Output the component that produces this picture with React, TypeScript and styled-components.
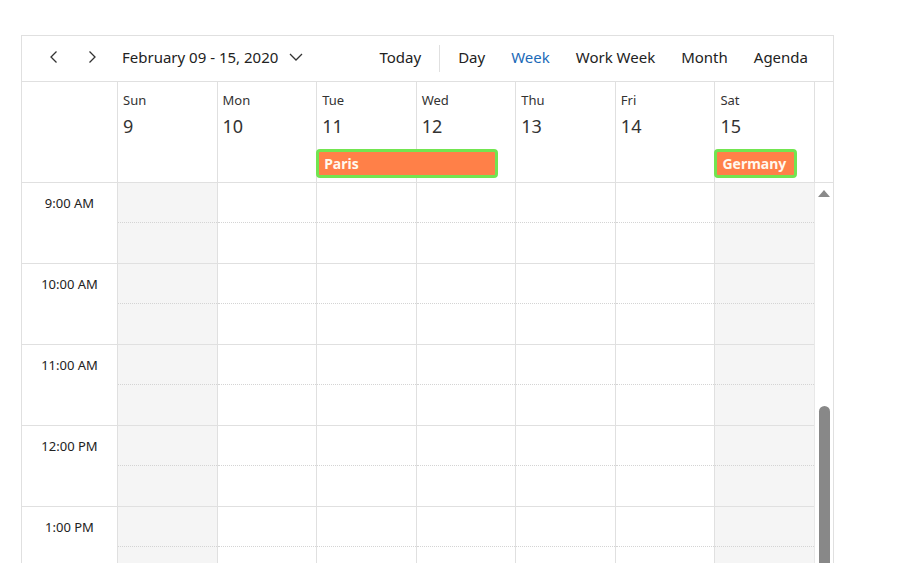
import styled, { createGlobalStyle } from 'styled-components';

// Datos de la semana
const days = [
  { name: 'Sun', date: 9, weekend: true },
  { name: 'Mon', date: 10, weekend: false },
  { name: 'Tue', date: 11, weekend: false },
  { name: 'Wed', date: 12, weekend: false },
  { name: 'Thu', date: 13, weekend: false },
  { name: 'Fri', date: 14, weekend: false },
  { name: 'Sat', date: 15, weekend: true }
];

const hours = ['9:00 AM', '10:00 AM', '11:00 AM', '12:00 PM', '1:00 PM'];

const events = [
  { title: 'Paris', column: '4 / 6' },
  { title: 'Germany', column: '8 / 9' }
];

const views = ['Day', 'Week', 'Work Week', 'Month', 'Agenda'];

const GlobalStyle = createGlobalStyle`
  html, body {
    margin: 0;
    background: #fff;
    overflow: hidden;
    font-family: 'Noto Sans', 'Open Sans', sans-serif;
    color: #333;
  }
`;

const Root = styled.div`
  padding: 35px 0 0 21px;
  height: 563px;
  box-sizing: border-box;
`;

const Scheduler = styled.div`
  width: 813px;
  border: 1px solid #e0e0e0;
  border-bottom: none;
  box-sizing: border-box;
`;

const Toolbar = styled.div`
  display: flex;
  align-items: center;
  height: 42px;
  padding: 0 12px 3px 17px;
  border-bottom: 1px solid #e0e0e0;
`;

const NavButton = styled.button`
  display: flex;
  align-items: center;
  justify-content: center;
  width: 30px;
  height: 30px;
  margin-right: 8px;
  padding: 0;
  border: none;
  background: none;
  color: #333;
  cursor: pointer;
`;

const DateRange = styled.div`
  display: flex;
  align-items: center;
  gap: 10px;
  margin-left: 7px;
  font-size: 15px;
  color: #222;
`;

const Spacer = styled.div`
  flex: 1;
`;

const ToolButton = styled.button<{ $active?: boolean }>`
  border: none;
  background: none;
  padding: 0 13px;
  font-family: inherit;
  font-size: 15px;
  color: ${(p) => (p.$active ? '#1b6ab8' : '#222')};
  cursor: pointer;
`;

const Divider = styled.div`
  width: 1px;
  height: 27px;
  margin: 3px 5px 0;
  background: #e0e0e0;
`;

const Header = styled.div`
  display: grid;
  grid-template-columns: 95px repeat(7, 1fr) 19px;
  grid-template-rows: 66px 34px;
  border-bottom: 1px solid #e0e0e0;
`;

const HeaderCell = styled.div<{ $col: number }>`
  grid-column: ${(p) => p.$col};
  grid-row: 1 / 3;
  border-left: 1px solid #e0e0e0;
  padding: 9px 0 0 5px;
`;

const ScrollGap = styled.div`
  grid-column: 9;
  grid-row: 1 / 3;
  border-left: 1px solid #e0e0e0;
`;

const DayName = styled.div`
  font-size: 13px;
  line-height: 18px;
  color: #333;
`;

const DayDate = styled.div`
  margin-top: 5px;
  font-size: 18px;
  line-height: 24px;
  color: #333;
`;

const Event = styled.div<{ $column: string }>`
  grid-column: ${(p) => p.$column};
  grid-row: 2;
  z-index: 1;
  align-self: start;
  margin: 1px 17px 0 0;
  height: 29px;
  box-sizing: border-box;
  border: 3px solid #72e550;
  border-radius: 4px;
  background: #ff8048;
  color: #fff8ee;
  font-size: 14px;
  font-weight: 700;
  line-height: 23px;
  padding-left: 5px;
`;

const Body = styled.div`
  display: flex;
`;

const TimeColumn = styled.div`
  width: 95px;
  flex-shrink: 0;
`;

const TimeSlot = styled.div`
  height: 81px;
  box-sizing: border-box;
  border-bottom: 1px solid #e0e0e0;
  padding-top: 11px;
  text-align: center;
  font-size: 13px;
  line-height: 18px;
  color: #222;
`;

const DayColumn = styled.div<{ $weekend: boolean }>`
  flex: 1;
  border-left: 1px solid #e0e0e0;
  background: ${(p) => (p.$weekend ? '#f5f5f5' : '#fff')};
`;

const HourCell = styled.div`
  height: 81px;
  box-sizing: border-box;
  border-bottom: 1px solid #e0e0e0;
`;

const HalfHour = styled.div`
  height: 39px;
  border-bottom: 1px dotted #d4d4d4;
`;

const Scrollbar = styled.div`
  width: 19px;
  flex-shrink: 0;
  border-left: 1px solid #e8e8e8;
  display: flex;
  flex-direction: column;
  align-items: center;
  padding-top: 7px;
  box-sizing: border-box;
`;

const ScrollArrow = styled.div`
  width: 0;
  height: 0;
  border-left: 6px solid transparent;
  border-right: 6px solid transparent;
  border-bottom: 7px solid #8a8a8a;
`;

const ScrollThumb = styled.div`
  margin-top: 209px;
  width: 11px;
  height: 200px;
  border-radius: 6px;
  background: #888;
`;

const Chevron = ({ d }: { d: string }) => (
  <svg width="16" height="16" viewBox="0 0 16 16" fill="none" stroke="#333" strokeWidth="1.3">
    <path d={d} />
  </svg>
);

const App = () => {
  return (
    <Root>
      <GlobalStyle />
      <Scheduler>
        <Toolbar>
          <NavButton>
            <Chevron d="M10.5 2.5 L5 8 L10.5 13.5" />
          </NavButton>
          <NavButton>
            <Chevron d="M5.5 2.5 L11 8 L5.5 13.5" />
          </NavButton>
          <DateRange>
            February 09 - 15, 2020
            <svg width="16" height="16" viewBox="0 0 16 16" fill="none" stroke="#333" strokeWidth="1.3">
              <path d="M2 5 L8 11 L14 5" />
            </svg>
          </DateRange>
          <Spacer />
          <ToolButton>Today</ToolButton>
          <Divider />
          {views.map((view) => (
            <ToolButton key={view} $active={view === 'Week'}>
              {view}
            </ToolButton>
          ))}
        </Toolbar>
        <Header>
          {days.map((day, index) => (
            <HeaderCell key={day.name} $col={index + 2}>
              <DayName>{day.name}</DayName>
              <DayDate>{day.date}</DayDate>
            </HeaderCell>
          ))}
          <ScrollGap />
          {events.map((event) => (
            <Event key={event.title} $column={event.column}>
              {event.title}
            </Event>
          ))}
        </Header>
        <Body>
          <TimeColumn>
            {hours.map((hour) => (
              <TimeSlot key={hour}>{hour}</TimeSlot>
            ))}
          </TimeColumn>
          {days.map((day) => (
            <DayColumn key={day.name} $weekend={day.weekend}>
              {hours.map((hour) => (
                <HourCell key={hour}>
                  <HalfHour />
                </HourCell>
              ))}
            </DayColumn>
          ))}
          <Scrollbar>
            <ScrollArrow />
            <ScrollThumb />
          </Scrollbar>
        </Body>
      </Scheduler>
    </Root>
  );
};

export default App;
